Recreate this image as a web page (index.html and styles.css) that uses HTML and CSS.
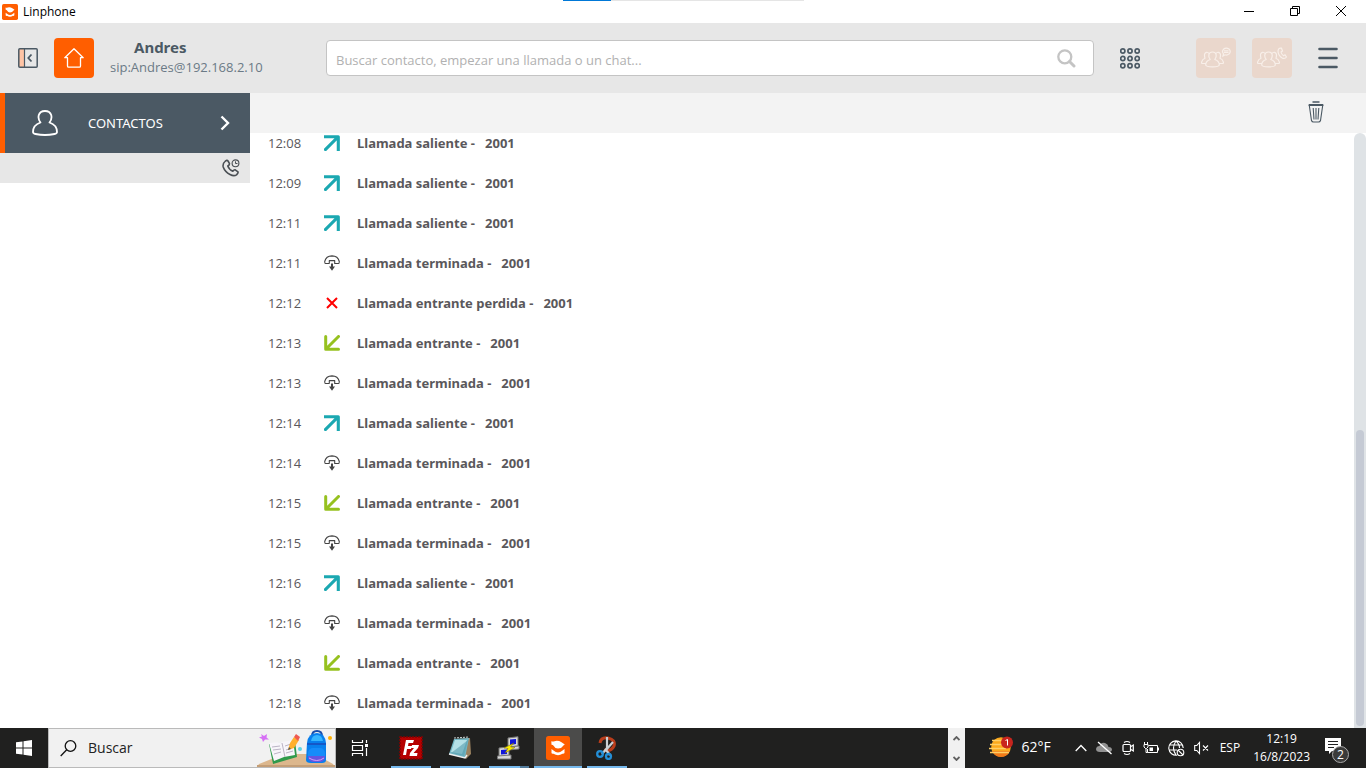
FILE: index.html
```html
<!DOCTYPE html>
<html lang="es">
<head>
<meta charset="utf-8">
<title>Linphone</title>
<link rel="stylesheet" href="styles.css">
</head>
<body>
<svg class="defs" aria-hidden="true">
  <symbol id="logo" viewBox="0 0 24 24"><rect width="24" height="24" rx="2.500" fill="#ff5e00"/><path d="M5.300 5.200Q7 6 8.500 5.200Q12 4.200 15.500 6.200L18.800 8.500Q17.500 9 17 10Q15.500 12.600 12 12.600Q9 12.600 7.800 10Q7 8.800 5.500 8.800Z" fill="#fff"/><path d="M5.500 13L7.500 14.500Q12 18.300 16.500 14.500L18.500 13V17Q18 18 16.500 17.800Q12 20.500 7.500 17.800Q5.500 18 5.500 17Z" fill="#fff"/></symbol>
  <symbol id="out" viewBox="0 0 16 16"><path d="M1.500 1.700H14.300V14.500M13.500 2.500L1.500 14.500" fill="none" stroke="#1ba8b1" stroke-width="3.100" stroke-linecap="square" stroke-linejoin="round"/></symbol>
  <symbol id="in" viewBox="0 0 16 16"><path d="M1.700 1.500V14.300H14.500M2.500 13.500L14.500 1.500" fill="none" stroke="#96c11f" stroke-width="3" stroke-linecap="round" stroke-linejoin="round"/></symbol>
  <symbol id="end" viewBox="0 0 16 16"><path d="M5.500 8.500H1.500Q.7 8.500.7 6.500Q2 1 8 .9Q14 1 15.300 6.500Q15.300 8.500 14.500 8.500H10.700V5.600H5.300V8.500" fill="none" stroke="#444" stroke-width="1.100" stroke-linejoin="round"/><path d="M7 8.500h2v3H11L8 15.700 5 11.500h2z" fill="#444"/></symbol>
  <symbol id="missed" viewBox="0 0 16 16"><path d="M3 3L13 13M13 3L3 13" fill="none" stroke="#f00" stroke-width="2"/></symbol>
  <symbol id="group" viewBox="0 0 30 22"><g fill="none" stroke="#f8efe9" stroke-width="1.200" stroke-linejoin="round"><path d="M5 16.500H1.500Q.3 16.500.6 15.200Q1.200 12.300 4 11.300Q2.500 6 5.500 5.300Q7 5 8 6.500"/><path d="M18 16.500H21.500Q22.700 16.500 22.400 15.200Q21.800 12.300 19 11.300Q20.500 6 17.500 5.300Q16 5 15 6.500"/><path d="M4.700 18Q4.700 14 9.200 12.500C6.800 9.500 7.300 5 11.500 5C15.700 5 16.200 9.500 13.800 12.500Q18.300 14 18.300 18Q18 19.800 11.500 19.800Q5 19.800 4.700 18Z"/></g></symbol>
</svg>

<header class="titlebar">
  <svg class="titlebar-logo"><use href="#logo"/></svg>
  <span class="titlebar-name">Linphone</span>
  <span class="progress"><span class="progress-done"></span></span>
  <button class="win-btn" aria-label="Minimizar"><svg width="10" height="10"><path d="M0 5.500H10" stroke="#000"/></svg></button>
  <button class="win-btn" aria-label="Restaurar"><svg width="10" height="10" fill="none" stroke="#000"><path d="M.5 2.500H7.500V9.500H.5ZM2.500 2.500V.5H9.500V7.500H7.500"/></svg></button>
  <button class="win-btn" aria-label="Cerrar"><svg width="10" height="10" stroke="#000"><path d="M0 0L10 10M10 0L0 10"/></svg></button>
</header>

<div class="toolbar">
  <button class="icon-btn" aria-label="Contraer panel"><svg width="20" height="20" fill="none" stroke="#4b5964" stroke-width="1.500"><path d="M1 1H6V19H1Z" fill="#ffc4a5" stroke="none"/><rect x=".8" y=".8" width="18.400" height="18.400" rx="1"/><path d="M6.500 1V19" stroke-width="1.200"/><path d="M13.500 6.500L10.300 10L13.500 13.500" stroke-width="1.800"/></svg></button>
  <button class="home" aria-label="Inicio"><svg width="20" height="20" fill="none" stroke="#fff" stroke-width="1.300" stroke-linejoin="round"><path d="M10 .8L.8 9.700H3.500V18Q3.500 19.200 4.700 19.200H15.300Q16.500 19.200 16.500 18V9.700H19.200Z"/></svg></button>
  <div class="identity"><strong class="identity-name">Andres</strong><span class="identity-sip">sip:Andres@192.168.2.10</span></div>
  <div class="search">
    <input class="search-input" type="text" aria-label="Buscar contacto" placeholder="Buscar contacto, empezar una llamada o un chat...">
    <svg class="search-icon" width="19" height="19" fill="none" stroke="#c4c4c4"><circle cx="7.800" cy="7.800" r="6.500" stroke-width="2.300"/><path d="M12.500 12.500L17 17" stroke-width="3" stroke-linecap="round"/></svg>
  </div>
  <button class="icon-btn keypad" aria-label="Teclado"><svg width="20" height="21" fill="none" stroke="#4b5964" stroke-width="1.700"><circle cx="2.800" cy="3" r="2.100"/><circle cx="10" cy="3" r="2.100"/><circle cx="17.200" cy="3" r="2.100"/><circle cx="2.800" cy="10.500" r="2.100"/><circle cx="10" cy="10.500" r="2.100"/><circle cx="17.200" cy="10.500" r="2.100"/><circle cx="2.800" cy="17.700" r="2.100"/><circle cx="10" cy="17.700" r="2.100"/><circle cx="17.200" cy="17.700" r="2.100"/></svg></button>
  <div class="conference">
    <button class="tile" aria-label="Chat de grupo"><svg width="30" height="22" fill="none" stroke="#f8efe9" stroke-width="1.200"><use href="#group"/><path d="M22 9L22.500 6.800Q20.500 4.500 22.500 2.300Q25 0 28 2Q30.500 4.500 28 7Q26 8.500 24 7.800ZM23 3.800h4.500M23 5.500h4.500"/></svg></button>
    <button class="tile" aria-label="Conferencia"><svg width="30" height="22" fill="none" stroke="#f8efe9" stroke-width="1.200"><use href="#group"/><path d="M24.500 1.200L25.500 4L24 5Q24.500 7.500 26.500 8.700L28 7.800L29.500 10Q28 12 25.500 11.200Q21 8.500 21 4Q21.500 .5 24.500 1.200Z"/></svg></button>
  </div>
  <button class="icon-btn" aria-label="Menú"><svg width="20" height="22" stroke="#4b5964" stroke-width="2.600" stroke-linecap="round"><path d="M1.500 2H18.500M1.500 11H18.500M1.500 20H18.500"/></svg></button>
</div>

<div class="workspace">
  <aside class="sidebar">
    <button class="contacts">
      <svg width="26" height="26" fill="none" stroke="#fff" stroke-width="1.800" stroke-linejoin="round"><path d="M8.500 12.500C5 8 6 1 13 1C20 1 21 8 17.500 12.500C22 14 25 17 25 22Q25 23.500 22.500 24Q13 26 3.500 24Q1 23.500 1 22C1 17 4 14 8.500 12.500Z"/></svg>
      <span class="contacts-label">CONTACTOS</span>
      <svg width="10" height="16" fill="none" stroke="#fff" stroke-width="2.400"><path d="M1.500 1.500L8 8L1.500 14.500"/></svg>
    </button>
    <div class="timeline-bar">
      <button class="icon-btn" aria-label="Filtrar llamadas"><svg width="18" height="18" fill="none" stroke="#4a4f54" stroke-width="1.600" stroke-linejoin="round"><path d="M3 2.500Q5 .5 6 2L7.500 4.700Q7.500 6 5.800 7Q7 10.500 10.800 12.200Q12 10.500 13.200 10.800L16 12.800Q16.500 14 14.500 15.800Q12 17.500 8 15.500Q3 13 1.200 8Q.5 4.500 3 2.500Z"/><circle cx="13.500" cy="4.300" r="3.400" stroke-width="1.100"/><path d="M13.500 2.300V4.500H15.500" stroke-width="1"/></svg></button>
    </div>
  </aside>
  <main class="history">
    <div class="history-bar">
      <button class="icon-btn" aria-label="Borrar historial"><svg width="16" height="22" fill="none" stroke="#4b5964"><path d="M4.500 1H11.500" stroke-width="1.500"/><path d="M.5 4.500H15.500M1.300 4.500L3.500 19.500Q4 21 5.500 21H10.500Q12 21 12.500 19.500L14.700 4.500M.7 3.500H15.300" stroke-width="1.100"/><path d="M5.200 7L6 18.500M8 7V18.500M10.800 7L10 18.500" stroke-width="1.100"/></svg></button>
    </div>
    <div class="history-body">
      <ol class="calls">
        <li class="call"><time class="call-time">12:08</time><svg class="call-icon"><use href="#out"/></svg><span class="call-text">Llamada saliente -</span><span class="call-peer">2001</span></li>
        <li class="call"><time class="call-time">12:09</time><svg class="call-icon"><use href="#out"/></svg><span class="call-text">Llamada saliente -</span><span class="call-peer">2001</span></li>
        <li class="call"><time class="call-time">12:11</time><svg class="call-icon"><use href="#out"/></svg><span class="call-text">Llamada saliente -</span><span class="call-peer">2001</span></li>
        <li class="call"><time class="call-time">12:11</time><svg class="call-icon"><use href="#end"/></svg><span class="call-text">Llamada terminada -</span><span class="call-peer">2001</span></li>
        <li class="call"><time class="call-time">12:12</time><svg class="call-icon"><use href="#missed"/></svg><span class="call-text">Llamada entrante perdida -</span><span class="call-peer">2001</span></li>
        <li class="call"><time class="call-time">12:13</time><svg class="call-icon"><use href="#in"/></svg><span class="call-text">Llamada entrante -</span><span class="call-peer">2001</span></li>
        <li class="call"><time class="call-time">12:13</time><svg class="call-icon"><use href="#end"/></svg><span class="call-text">Llamada terminada -</span><span class="call-peer">2001</span></li>
        <li class="call"><time class="call-time">12:14</time><svg class="call-icon"><use href="#out"/></svg><span class="call-text">Llamada saliente -</span><span class="call-peer">2001</span></li>
        <li class="call"><time class="call-time">12:14</time><svg class="call-icon"><use href="#end"/></svg><span class="call-text">Llamada terminada -</span><span class="call-peer">2001</span></li>
        <li class="call"><time class="call-time">12:15</time><svg class="call-icon"><use href="#in"/></svg><span class="call-text">Llamada entrante -</span><span class="call-peer">2001</span></li>
        <li class="call"><time class="call-time">12:15</time><svg class="call-icon"><use href="#end"/></svg><span class="call-text">Llamada terminada -</span><span class="call-peer">2001</span></li>
        <li class="call"><time class="call-time">12:16</time><svg class="call-icon"><use href="#out"/></svg><span class="call-text">Llamada saliente -</span><span class="call-peer">2001</span></li>
        <li class="call"><time class="call-time">12:16</time><svg class="call-icon"><use href="#end"/></svg><span class="call-text">Llamada terminada -</span><span class="call-peer">2001</span></li>
        <li class="call"><time class="call-time">12:18</time><svg class="call-icon"><use href="#in"/></svg><span class="call-text">Llamada entrante -</span><span class="call-peer">2001</span></li>
        <li class="call"><time class="call-time">12:18</time><svg class="call-icon"><use href="#end"/></svg><span class="call-text">Llamada terminada -</span><span class="call-peer">2001</span></li>
      </ol>
      <div class="scrollbar"><div class="scrollbar-thumb"></div></div>
    </div>
  </main>
</div>

<footer class="taskbar">
  <button class="start" aria-label="Inicio de Windows"><svg width="16" height="16" fill="#fff"><path d="M0 2.300L6.500 1.400V7.500H0ZM7.500 1.200L16 0V7.500H7.500ZM0 8.500H6.500V14.600L0 13.700ZM7.500 8.500H16V16L7.500 14.800Z"/></svg></button>
  <button class="task-search">
    <svg width="17" height="17" fill="none" stroke="#111" stroke-width="1.300"><circle cx="10.500" cy="6" r="5.300"/><path d="M6.700 9.800L.7 16"/></svg>
    <span class="task-search-label">Buscar</span>
    <svg width="78" height="38" viewBox="0 0 78 38">
      <path d="M0 38L2 35L27 25H58L76 35L78 38Z" fill="#dcb78d"/><path d="M0 36H78V38H0Z" fill="#c49e76"/>
      <path d="M4 5L7 7L10 5L9.500 8.500L12 10.500L8 10.500L6 13L5 10L2 8.500L5 7.500Z" fill="#d670f5"/>
      <path d="M12 15L38 12L40 28L16 35Z" fill="#2f9a4b"/><path d="M12 14L25 13L36 11L38 26L27 28L17 32Z" fill="#f7f5fa"/><path d="M25 14L28 28M15 18L23 17M16 21L24 20M17 25L24 23M28 17L34 15M29 21L35 19M29 24L36 22" stroke="#bbb4c5" fill="none"/>
      <path d="M31 21L33 14L37 8L42 11L37 19Z" fill="#ffb02e"/><path d="M31 21L32 18L34 20Z" fill="#555"/><path d="M37 8L39 5L43 8L41 12Z" fill="#ef5a50"/>
      <circle cx="43" cy="20" r="2" fill="#5bd5e5"/><circle cx="73" cy="9" r="2" fill="#ffb000"/>
      <path d="M55 7Q55 2 60 2Q65 2 65 7" fill="none" stroke="#174cac" stroke-width="2"/><path d="M50 14Q51 4 60 4Q68 4 69 14V31Q69 34 65 34H54Q49 34 49 31Z" fill="#087fed"/><path d="M54 12Q55 6 60 6Q65 6 66 12Z" fill="#35b5ff"/><path d="M50 14H69V16H50Z" fill="#1557c7"/><rect x="51" y="19" width="17" height="13" rx="5" fill="#168cfa"/><path d="M51 27H68Q68 33 62 33H57Q51 33 51 27Z" fill="#6555e1"/><path d="M52 29Q60 34 67 29" fill="none" stroke="#d5a2fa"/>
    </svg>
  </button>
  <nav class="apps" aria-label="Aplicaciones">
    <button class="app" aria-label="Vista de tareas"><svg width="18" height="16" fill="none" stroke="#fff" stroke-width="1.200"><path d="M1.500 0V2.500H11.500V0M1.500 16V13.500H11.500V16M1.500 5.500H11.500V10.500H1.500ZM15.500 0V3M15.500 8V16"/><path d="M14 4H17V7H14Z" fill="#fff" stroke="none"/></svg></button>
    <button class="app app-open" aria-label="FileZilla"><svg width="24" height="24"><rect x="1" y="1" width="22" height="22" fill="#b60000" stroke="#850000" stroke-width="1.500" stroke-dasharray="2 1"/><path d="M4 19L7 4H15L14 7H9.500L9 10H13L12 13H8L7 19ZM13 9H20L19 12L14.500 17H18.500L18 20H10.500L11 17L15 12H12.500Z" fill="#fff"/></svg></button>
    <button class="app app-open" aria-label="Bloc de notas"><svg width="24" height="24"><path d="M7 3L22 2L23 18L18 23Z" fill="#9b8260"/><path d="M6 3L21 2L17 22L1 18Z" fill="#72b6c4"/><path d="M7 4L19 4L14 18L3 16Z" fill="#b5e1e7"/><path d="M11 11L20 4L16 20L3 17Z" fill="#599eaf" opacity=".6"/><path d="M1 18L17 22L19 19" fill="none" stroke="#eee" stroke-width="1.500"/><path d="M6 2L21 1" stroke="#c9d0d0" stroke-dasharray="2 1"/></svg></button>
    <button class="app app-open app-stack" aria-label="PuTTY"><svg width="24" height="24"><g fill="#d9d9d9" stroke="#777"><path d="M11 2L21 .7V10L11 11Z"/><path d="M2 12L12 11V20L2 21Z"/><path d="M11 11L22 10V13L11 14ZM.5 20L14 19V23H.5Z"/></g><path d="M13 3.500L19 3V8L13 9ZM4 14L10 13.500V18L4 18.500Z" fill="#1015dc"/><path d="M17 7L7 12L11 12.500L8 17L18 11.500L13.500 11Z" fill="#ffef00" stroke="#766800" stroke-width=".5"/></svg></button>
    <button class="app app-active" aria-label="Linphone"><svg width="24" height="24"><use href="#logo"/></svg></button>
    <button class="app app-open" aria-label="Recortes"><svg width="24" height="24" fill="none"><path d="M5 7Q6 1 13 2Q21 4 19 10Q16 16 9 14" stroke="#b93d1b" stroke-width="3"/><path d="M12 1V12L7 18M18 6L11 14L15 19" stroke="#cbd0d4" stroke-width="2.200"/><circle cx="5" cy="18" r="2.800" stroke="#248fd7" stroke-width="2.300"/><circle cx="13.500" cy="20.500" r="2.500" stroke="#248fd7" stroke-width="2.300"/></svg></button>
  </nav>
  <div class="spinner">
    <button class="spin-btn" aria-label="Arriba"><svg width="7" height="5" fill="none" stroke="#606060" stroke-width="1.800"><path d="M.5 4L3.500 1L6.500 4"/></svg></button>
    <button class="spin-btn" aria-label="Abajo"><svg width="7" height="5" fill="none" stroke="#606060" stroke-width="1.800"><path d="M.5 1L3.500 4L6.500 1"/></svg></button>
  </div>
  <button class="weather">
    <svg width="26" height="22"><circle cx="12" cy="11" r="9.800" fill="#fba91c"/><path d="M3 15H21Q18 21 12 21Q6 21 3 15Z" fill="#f27b19"/><path d="M3 4.500H17M1 8.500H19M0 12.500H17M1 16.500H20" stroke="#ffcf65" stroke-width="1.500"/><circle cx="18" cy="6.500" r="6" fill="#c8251e"/><path d="M16.500 4.500L18.500 3.500V9.500" stroke="#fff" fill="none"/></svg>
    <span>62°F</span>
  </button>
  <div class="tray">
    <button class="tray-btn" aria-label="Mostrar iconos ocultos"><svg width="12" height="8" fill="none" stroke="#fff" stroke-width="1.300"><path d="M.7 7L6 1.500L11.300 7"/></svg></button>
    <button class="tray-btn" aria-label="OneDrive"><svg width="17" height="14"><path d="M4 11Q0 11 0 8Q.5 5 3.500 5Q5 1 9 2Q12 3 12.500 6Q16 6 16 9Q15.500 11 13 11Z" fill="#929292"/><path d="M2 1L15.500 13" stroke="#fff" stroke-width="1.300"/></svg></button>
    <button class="tray-btn" aria-label="Cámara"><svg width="12" height="16" fill="none" stroke="#fff" stroke-width="1.200"><path d="M2 2.500Q5 .5 8 2.500M2 13.500Q5 15.500 8 13.500"/><rect x="1" y="4.500" width="7.500" height="7" rx="1"/><path d="M9 6.500L11.300 5V11L9 9.500"/></svg></button>
    <button class="tray-btn" aria-label="Batería"><svg width="16" height="14" fill="none" stroke="#fff"><path d="M5.500 4.500H14.500V11.500H4.500V8M15.500 6.500V9.500M1 3.500H5V6L3.500 7.500H2.500L1 6ZM1.500 1V3M4.500 1V3M3 7.500V11.500H4.500"/><path d="M6.500 6.500H10V10H6.500Z" fill="#fff" stroke="none"/></svg></button>
    <button class="tray-btn" aria-label="Red"><svg width="17" height="17" fill="none" stroke="#fff" stroke-width="1.100"><path d="M9 15.200A7.200 7.200 0 1 1 15.200 8M8 1Q3 8 8 15M8 1Q11.500 4 11.500 8M1.500 5H14.500M1 10H9"/><circle cx="12.500" cy="12.500" r="3.300"/><path d="M10 10L15 15"/></svg></button>
    <button class="tray-btn" aria-label="Volumen silenciado"><svg width="16" height="14" fill="none" stroke="#fff" stroke-width="1.100"><path d="M5.500 1.500V12.500L2.800 9.500H.7V4.500H2.800ZM9 4.500L14 9.500M14 4.500L9 9.500"/></svg></button>
  </div>
  <button class="language">ESP</button>
  <button class="clock"><time>12:19</time><time>16/8/2023</time></button>
  <button class="notices" aria-label="2 notificaciones"><svg width="17" height="16"><path d="M0 0H16V13H7L4 16V13H0Z" fill="#fff"/><path d="M3 3.500H13M3 6.500H13M3 9.500H9" stroke="#222"/></svg><span class="badge">2</span></button>
</footer>
</body>
</html>
```
FILE: styles.css
```css
* { box-sizing: border-box; }

body {
  margin: 0;
  height: 100vh;
  display: flex;
  flex-direction: column;
  overflow: hidden;
  background: #fff;
  color: #4b5964;
  font: 13px/20px "Open Sans", "Noto Sans", sans-serif;
}

button {
  border: 0;
  padding: 0;
  background: none;
  color: inherit;
  font: inherit;
  display: flex;
  align-items: center;
  justify-content: center;
  flex: none;
}

svg { display: block; flex: none; }
.defs { position: absolute; width: 0; height: 0; }

/* Title bar */
.titlebar { position: relative; display: flex; align-items: center; height: 23px; padding-left: 2px; flex: none; }
.titlebar-logo { width: 16px; height: 16px; }
.titlebar-name { margin: 0 auto 0 5px; color: #000; font-size: 12px; }
.progress { position: absolute; top: 0; left: 50%; width: 241px; height: 1px; margin-left: -120px; background: #e5e5e5; }
.progress-done { display: block; width: 20%; height: 1px; background: #0078d7; }
.win-btn { width: 46px; height: 22px; align-self: flex-start; }
.win-btn:last-child { margin-right: 2px; }

/* Toolbar */
.toolbar { display: flex; align-items: center; height: 70px; padding: 0 28px 0 18px; background: #e7e7e7; flex: none; }
.home { width: 40px; height: 40px; margin: 0 16px; border-radius: 4px; background: #ff5e00; }
.identity { width: 216px; display: flex; flex-direction: column; padding-bottom: 2px; flex: none; }
.identity-name { padding-left: 24px; font-family: "Noto Sans", sans-serif; font-size: 15px; }
.identity-sip { color: #6b7a86; }
.search { flex: 1; min-width: 0; display: flex; align-items: center; height: 36px; padding: 0 17px 0 9px; border: 1px solid #c4c4c4; border-radius: 4px; background: #fff; }
.search-input { flex: 1; min-width: 0; height: 100%; padding: 4px 0 0; border: 0; outline: 0; background: none; color: #4b5964; font: inherit; }
.search-input::placeholder { color: #b1b1b1; opacity: 1; }
.keypad { margin: 0 56px 0 26px; }
.conference { display: flex; gap: 16px; margin-right: 26px; }
.tile { width: 40px; height: 40px; border-radius: 4px; background: #ead7cc; }

/* Workspace */
.workspace { flex: 1; min-height: 0; display: flex; }
.sidebar { width: 250px; flex: none; }
.contacts { width: 100%; height: 60px; padding: 0 20px 0 27px; border-left: 5px solid #ff5e00; background: #4b5964; color: #fff; }
.contacts-label { flex: 1; margin-left: 30px; font-family: "Noto Sans", sans-serif; text-align: left; }
.timeline-bar { display: flex; justify-content: flex-end; align-items: center; height: 30px; padding-right: 10px; background: #e7e7e7; }

.history { flex: 1; min-width: 0; display: flex; flex-direction: column; }
.history-bar { display: flex; justify-content: flex-end; align-items: center; height: 40px; padding: 0 42px 2px 0; background: #f3f3f3; flex: none; }
.history-body { flex: 1; min-height: 0; display: flex; }
.calls { flex: 1; margin: 0; padding: 0 18px 5px; list-style: none; overflow: hidden; display: flex; flex-direction: column; justify-content: flex-end; }
.call { display: flex; align-items: center; height: 40px; flex: none; color: #5a585b; }
.call-time { width: 56px; }
.call-icon { width: 16px; height: 16px; margin-right: 17px; }
.call-text, .call-peer { font-family: "Noto Sans", sans-serif; font-weight: bold; }
.call-text { margin-right: 10px; }
.scrollbar { width: 12px; padding: 0 2px 2px; display: flex; flex-direction: column; justify-content: flex-end; border-radius: 6px 6px 0 0; background: #dfe3e6; }
.scrollbar-thumb { height: 50%; border-radius: 4px; background: #c5cad4; }

/* Taskbar */
.taskbar { display: flex; height: 40px; background: #20201f; color: #fff; font-size: 12px; flex: none; }
.start { width: 48px; }
.task-search { width: 288px; padding: 0 0 0 11px; border: 1px solid #bababa; background: #f1f1f1; color: #222; font-size: 14px; }
.task-search-label { flex: 1; margin-left: 11px; text-align: left; }
.apps { flex: 1; display: flex; gap: 1px; }
.app { position: relative; width: 48px; height: 40px; }
.app:first-child { margin-right: 2px; }
.app-open::after { content: ""; position: absolute; left: 4px; right: 4px; bottom: 0; height: 2px; background: #76b9ed; }
.app-stack::after { background: linear-gradient(to right, #76b9ed 31px, #527b9b 31px); }
.app-active { background: #4b4b4a; border-bottom: 2px solid #76b9ed; padding-top: 2px; }
.spinner { width: 17px; display: flex; flex-direction: column; background: #f1f1f1; flex: none; }
.spin-btn { flex: 1; width: 100%; }
.weather { gap: 6px; margin: 0 24px; padding-bottom: 2px; font-size: 14px; }
.tray { display: flex; align-items: center; gap: 9px; margin-right: 10px; }
.tray-btn { height: 100%; }
.language { margin-right: 13px; }
.clock { flex-direction: column; line-height: 18px; }
.notices { position: relative; width: 56px; }
.notices svg { margin: 0 10px 4px 0; }
.badge { position: absolute; right: 17px; bottom: 5px; width: 17px; height: 17px; border: 1px solid #aaa; border-radius: 50%; background: #3b3b3a; font-size: 12px; line-height: 15px; text-align: center; }
```
